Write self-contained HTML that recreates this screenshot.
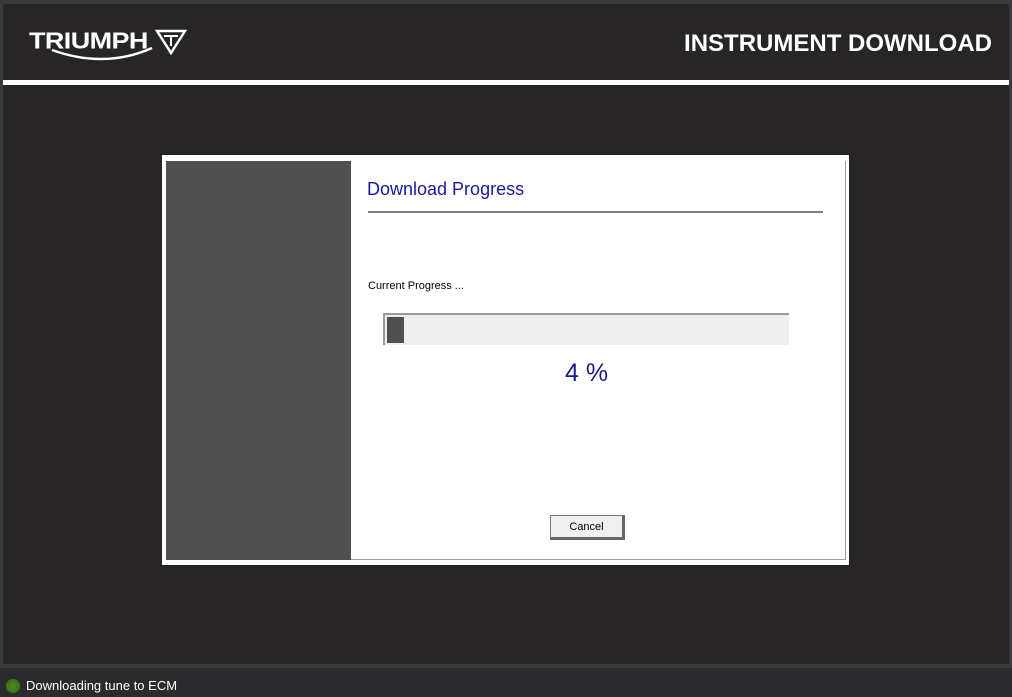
<!DOCTYPE html>
<html><head><style>
body{margin:0;width:1012px;height:697px;background:#282526;position:relative;overflow:hidden;font-family:"Liberation Sans",sans-serif}
.a{position:absolute}
</style></head><body>
<div class="a" style="left:0;top:0;width:1012px;height:4px;background:#3a393d"></div>
<div class="a" style="left:0;top:4px;width:3px;height:660px;background:#3a393d"></div>
<div class="a" style="right:0;top:4px;width:3px;height:660px;background:#3a393d"></div>
<div class="a" style="left:3px;top:80px;width:1006px;height:5px;background:#fff"></div>
<div class="a" style="left:29px;top:28px;color:#fff;font-weight:bold;font-size:27px;letter-spacing:-0.6px;transform:scaleY(0.85);transform-origin:top left">TRIUMPH</div>
<svg class="a" style="left:50px;top:47px" width="110" height="16"><path d="M2 3 Q55 22 102 1" stroke="#fff" stroke-width="2.5" fill="none"/></svg>
<svg class="a" style="left:155px;top:29px" width="32" height="26"><path d="M2 2 H30 L16 24 Z" stroke="#fff" stroke-width="2.5" fill="none"/><path d="M9 7 H23 M16 7 V17" stroke="#fff" stroke-width="2" fill="none"/></svg>
<div class="a" style="right:20px;top:30px;color:#fff;font-weight:bold;font-size:24px">INSTRUMENT DOWNLOAD</div>
<div class="a" style="left:162px;top:155px;width:687px;height:410px;background:#fff"></div>
<div class="a" style="left:166px;top:161px;width:679px;height:398px;border-right:1px solid #a0a0a0;border-bottom:1px solid #a0a0a0"></div>
<div class="a" style="left:166px;top:161px;width:185px;height:399px;background:#505050"></div>
<div class="a" style="left:367px;top:179px;color:#1a1a9a;font-size:18px">Download Progress</div>
<div class="a" style="left:368px;top:211px;width:455px;height:2px;background:#808080"></div>
<div class="a" style="left:368px;top:280px;color:#000;font-size:11px">Current Progress ...</div>
<div class="a" style="left:383px;top:313px;width:404px;height:30px;background:#efefef;border-top:2px solid #999;border-left:2px solid #999"></div>
<div class="a" style="left:387px;top:317px;width:17px;height:26px;background:#505050"></div>
<div class="a" style="left:565px;top:359px;color:#1a1a8a;font-size:25px">4 %</div>
<div class="a" style="left:550px;top:515px;width:71px;height:21px;background:#f0f0f0;border:1px solid #777;border-right:3px solid #666;border-bottom:3px solid #666;font-size:11px;text-align:center;line-height:22px">Cancel</div>
<div class="a" style="left:0;top:664px;width:1012px;height:4px;background:#3a393d"></div>
<div class="a" style="left:0;top:668px;width:1012px;height:29px;background:#2b2a2d"></div>
<div class="a" style="left:6px;top:679px;width:14px;height:14px;border-radius:50%;background:radial-gradient(#4a8a20,#2f6a10)"></div>
<div class="a" style="left:26px;top:678px;color:#fff;font-size:13px">Downloading tune to ECM</div>
</body></html>
